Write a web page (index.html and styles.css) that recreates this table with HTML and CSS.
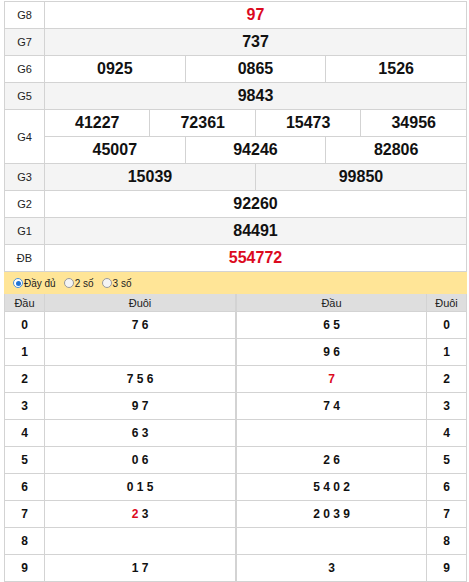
FILE: index.html
```html
<!DOCTYPE html>
<html lang="vi">
<head>
<meta charset="utf-8">
<title>Kết quả xổ số</title>
<link rel="stylesheet" href="styles.css">
</head>
<body>
<div class="wrap">
  <table class="kq">
    <colgroup><col class="c-lbl"><col span="12"></colgroup>
    <tr><td class="lbl">G8</td><td colspan="12" class="num red">97</td></tr>
    <tr class="alt"><td class="lbl">G7</td><td colspan="12" class="num">737</td></tr>
    <tr><td class="lbl">G6</td><td colspan="4" class="num">0925</td><td colspan="4" class="num">0865</td><td colspan="4" class="num">1526</td></tr>
    <tr class="alt"><td class="lbl">G5</td><td colspan="12" class="num">9843</td></tr>
    <tr><td class="lbl" rowspan="2">G4</td><td colspan="3" class="num">41227</td><td colspan="3" class="num">72361</td><td colspan="3" class="num">15473</td><td colspan="3" class="num">34956</td></tr>
    <tr><td colspan="4" class="num">45007</td><td colspan="4" class="num">94246</td><td colspan="4" class="num">82806</td></tr>
    <tr class="alt"><td class="lbl">G3</td><td colspan="6" class="num">15039</td><td colspan="6" class="num">99850</td></tr>
    <tr><td class="lbl">G2</td><td colspan="12" class="num">92260</td></tr>
    <tr class="alt"><td class="lbl">G1</td><td colspan="12" class="num">84491</td></tr>
    <tr><td class="lbl">ĐB</td><td colspan="12" class="num red">554772</td></tr>
  </table>

  <div class="opts">
    <label class="opt"><span class="radio on"></span>Đầy đủ</label>
    <label class="opt"><span class="radio"></span>2 số</label>
    <label class="opt"><span class="radio"></span>3 số</label>
  </div>

  <div class="loto">
    <table class="lt lt-left">
      <colgroup><col class="c-lbl"><col></colgroup>
      <tr class="hd"><th>Đầu</th><th>Đuôi</th></tr>
      <tr><td class="k">0</td><td>7 6</td></tr>
      <tr><td class="k">1</td><td></td></tr>
      <tr><td class="k">2</td><td>7 5 6</td></tr>
      <tr><td class="k">3</td><td>9 7</td></tr>
      <tr><td class="k">4</td><td>6 3</td></tr>
      <tr><td class="k">5</td><td>0 6</td></tr>
      <tr><td class="k">6</td><td>0 1 5</td></tr>
      <tr><td class="k">7</td><td><span class="red">2</span> 3</td></tr>
      <tr><td class="k">8</td><td></td></tr>
      <tr><td class="k">9</td><td>1 7</td></tr>
    </table>
    <table class="lt lt-right">
      <colgroup><col><col class="c-lbl"></colgroup>
      <tr class="hd"><th>Đầu</th><th>Đuôi</th></tr>
      <tr><td>6 5</td><td class="k">0</td></tr>
      <tr><td>9 6</td><td class="k">1</td></tr>
      <tr><td><span class="red">7</span></td><td class="k">2</td></tr>
      <tr><td>7 4</td><td class="k">3</td></tr>
      <tr><td></td><td class="k">4</td></tr>
      <tr><td>2 6</td><td class="k">5</td></tr>
      <tr><td>5 4 0 2</td><td class="k">6</td></tr>
      <tr><td>2 0 3 9</td><td class="k">7</td></tr>
      <tr><td></td><td class="k">8</td></tr>
      <tr><td>3</td><td class="k">9</td></tr>
    </table>
  </div>
</div>
</body>
</html>
```

FILE: styles.css
```css
html, body {
  margin: 0;
  padding: 0;
  background: #fff;
}
body {
  font-family: "Liberation Sans", Arial, sans-serif;
  color: #111;
}
.wrap {
  width: 463px;
  margin: 1px 0 0 4px;
}
table {
  border-collapse: collapse;
  table-layout: fixed;
}
.kq {
  width: 463px;
}
.kq col.c-lbl {
  width: 40px;
}
.kq td {
  border: 1px solid #d3d3d3;
  height: 26px;
  padding: 0;
  text-align: center;
  vertical-align: middle;
}
.kq tr.alt td {
  background: #f4f4f4;
}
.kq td.lbl {
  font-size: 11px;
  color: #222;
  background: inherit;
}
.kq td.num {
  font-size: 16px;
  font-weight: bold;
  color: #111;
}
.red, .kq td.red {
  color: #dc0a1e;
}
.opts {
  display: flex;
  align-items: center;
  height: 22px;
  padding-left: 9px;
  background: #ffe597;
  font-size: 10px;
  color: #222;
}
.opt {
  display: flex;
  align-items: center;
  margin-right: 8px;
}
.radio {
  box-sizing: border-box;
  width: 10px;
  height: 10px;
  border-radius: 50%;
  border: 1px solid #9a9a9a;
  background: #f4f4f4;
  margin-right: 1px;
  position: relative;
}
.radio.on {
  border-color: #4a90d9;
  background: #fff;
}
.radio.on::after {
  content: "";
  position: absolute;
  left: 1.5px;
  top: 1.5px;
  width: 5px;
  height: 5px;
  border-radius: 50%;
  background: #1f74d6;
}
.loto {
  display: flex;
}
.lt {
  font-size: 12px;
}
.lt-left {
  width: 232px;
}
.lt-right {
  width: 231px;
}
.lt col.c-lbl {
  width: 40px;
}
.lt th {
  background: #dedede;
  font-weight: normal;
  font-size: 11px;
  color: #222;
  height: 17px;
  padding: 0;
  border: 1px solid #d3d3d3;
  border-top: 0;
}
.lt td {
  border: 1px solid #d3d3d3;
  height: 26px;
  padding: 0;
  text-align: center;
  font-weight: bold;
  color: #111;
}
```
